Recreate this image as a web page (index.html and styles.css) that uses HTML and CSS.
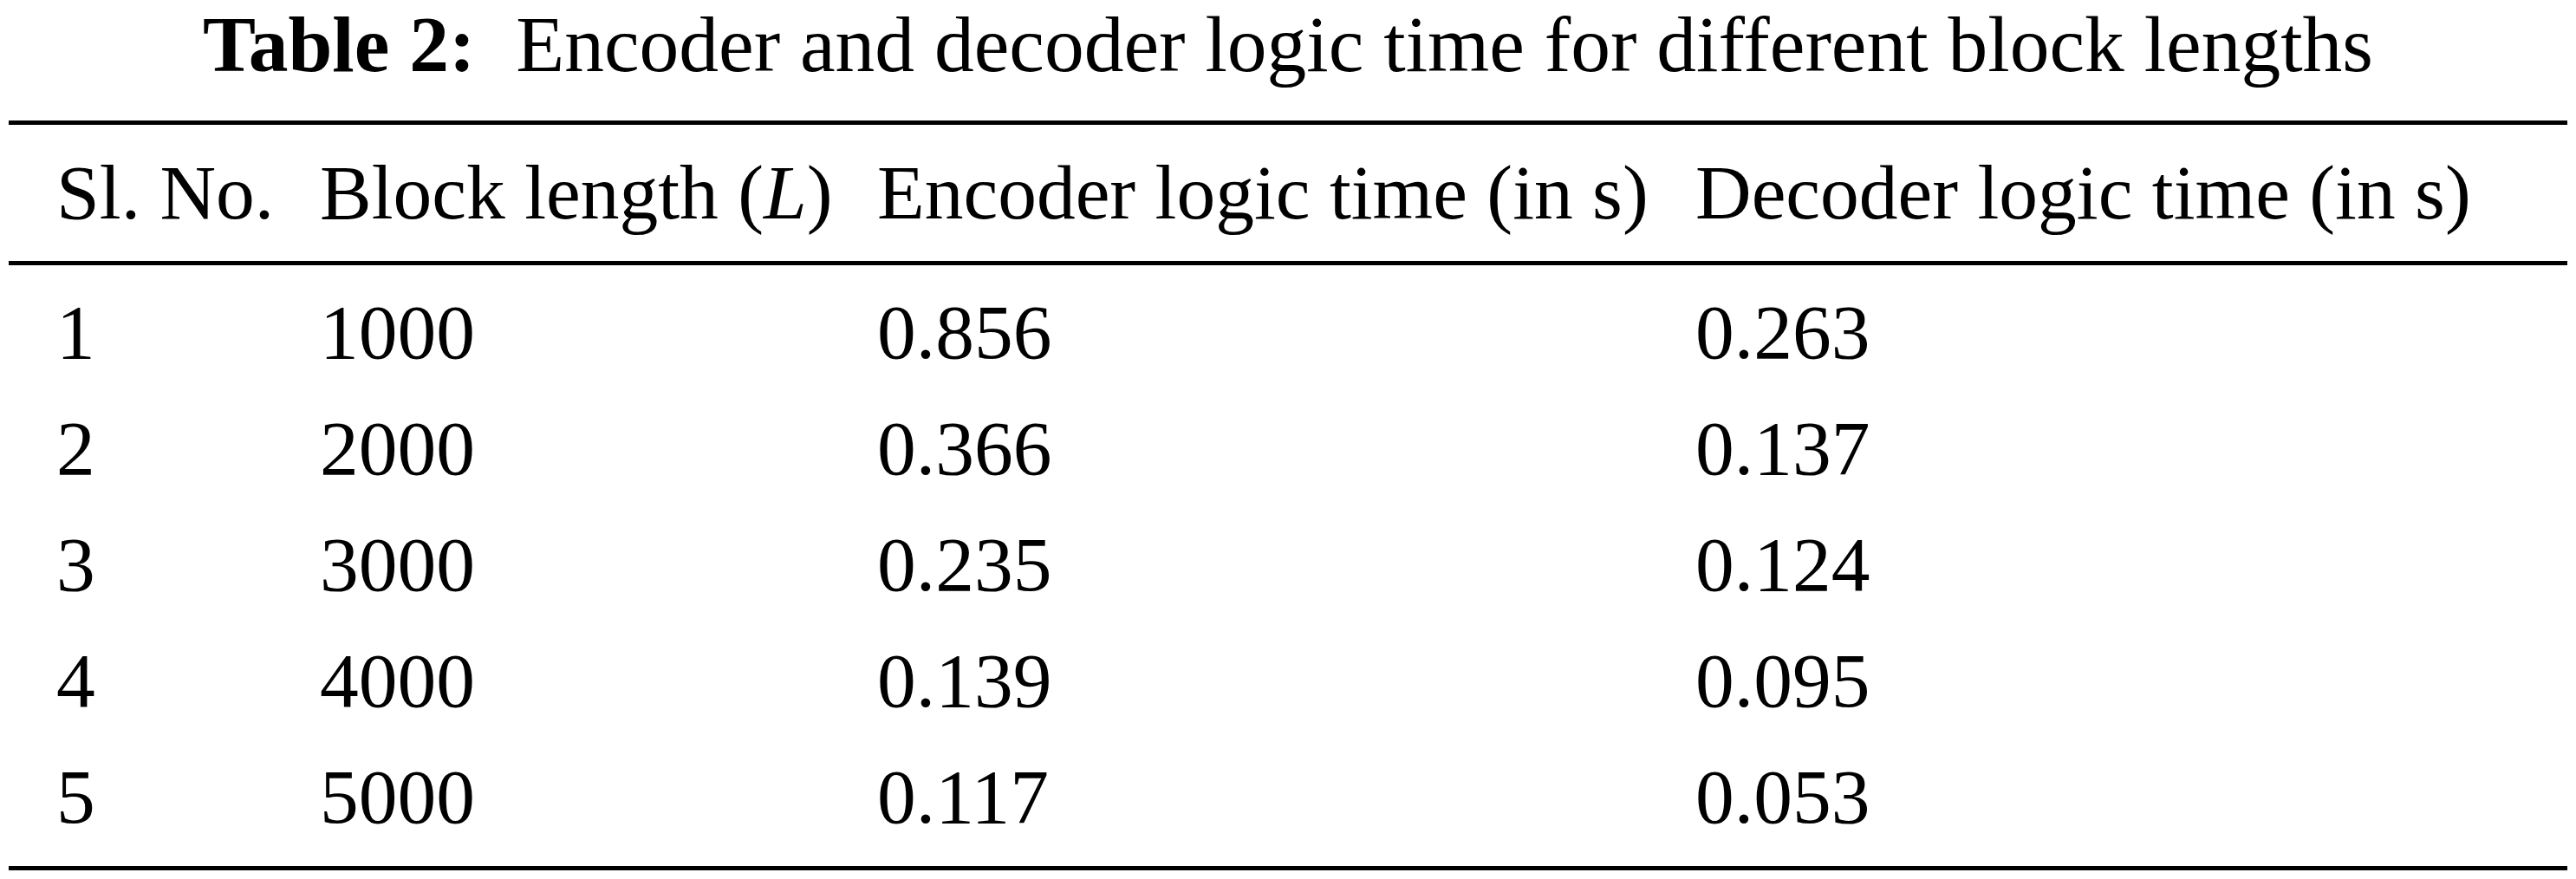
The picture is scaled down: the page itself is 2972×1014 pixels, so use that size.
FILE: index.html
```html
<!DOCTYPE html>
<html>
<head>
<meta charset="utf-8">
<link rel="stylesheet" href="styles.css">
</head>
<body>
<div class="page">
  <h1 class="caption"><span class="label">Table 2:</span> Encoder and decoder logic time for different block lengths</h1>
  <div class="table">
    <div class="head">
      <div class="cell">Sl. No.</div>
      <div class="cell">Block length (<i>L</i>)</div>
      <div class="cell">Encoder logic time (in s)</div>
      <div class="cell">Decoder logic time (in s)</div>
    </div>
    <div class="body">
      <div class="cell">1</div><div class="cell">1000</div><div class="cell">0.856</div><div class="cell">0.263</div>
      <div class="cell">2</div><div class="cell">2000</div><div class="cell">0.366</div><div class="cell">0.137</div>
      <div class="cell">3</div><div class="cell">3000</div><div class="cell">0.235</div><div class="cell">0.124</div>
      <div class="cell">4</div><div class="cell">4000</div><div class="cell">0.139</div><div class="cell">0.095</div>
      <div class="cell">5</div><div class="cell">5000</div><div class="cell">0.117</div><div class="cell">0.053</div>
    </div>
  </div>
</div>
</body>
</html>
```

FILE: styles.css
```css
html, body {
  margin: 0;
  padding: 0;
  background: #ffffff;
}

body {
  font-family: "Liberation Serif", "Times New Roman", serif;
  font-size: 89.5px;
  color: #000000;
  width: 2972px;
  height: 1014px;
  overflow: hidden;
}

.page {
  display: flex;
  flex-direction: column;
  padding-left: 10px;
  width: 2952px;
}

.caption {
  margin: 0;
  height: 139px;
  font-size: 91.5px;
  font-weight: normal;
  line-height: 102px;
  text-align: center;
  white-space: nowrap;
}

.label {
  font-weight: bold;
  margin-right: 24px;
}

.table {
  border-top: 5px solid #000;
  border-bottom: 5px solid #000;
}

.head,
.body {
  display: grid;
  grid-template-columns: 304px 643px 944px 1fr;
  padding-left: 55px;
  white-space: nowrap;
}

.head {
  height: 157px;
  line-height: 155px;
  border-bottom: 5px solid #000;
}

.body {
  padding-top: 10px;
  padding-bottom: 13.5px;
  line-height: 133.9px;
}

.cell i {
  font-style: italic;
}
```
